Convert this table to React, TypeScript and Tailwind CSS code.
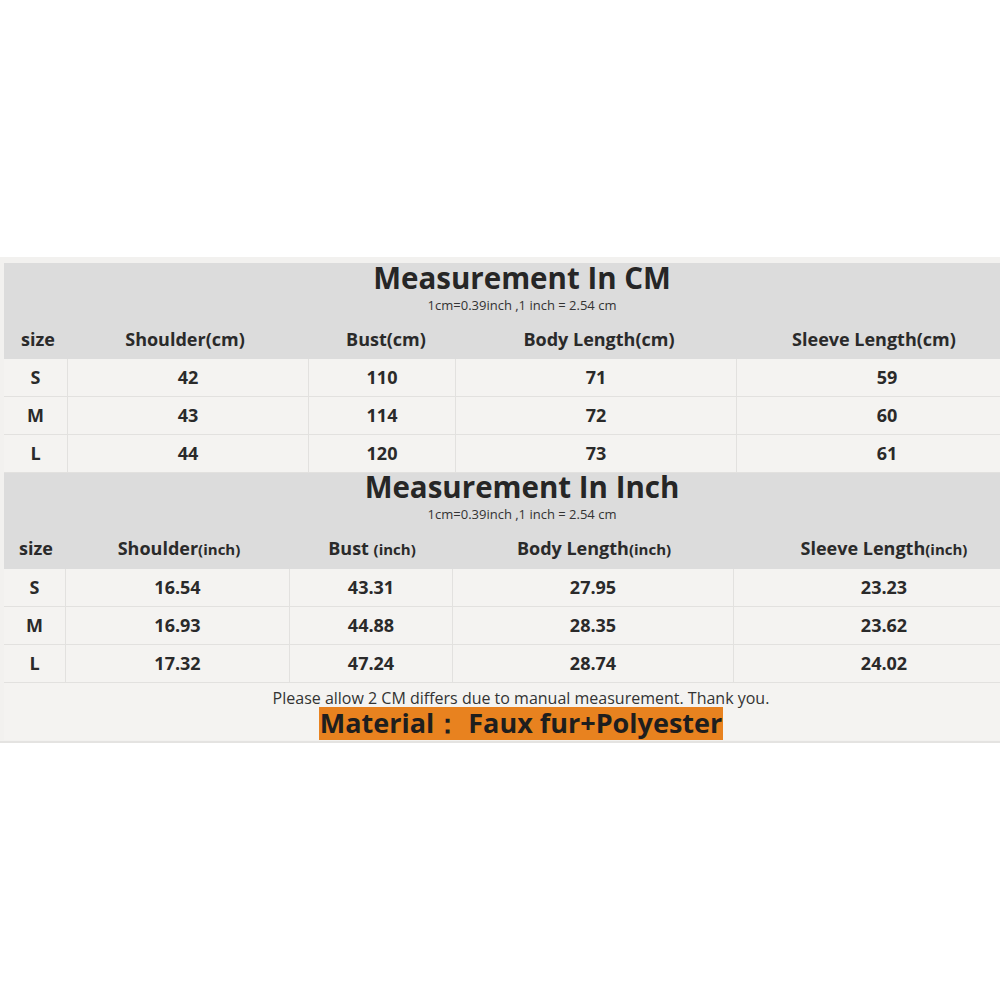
import React from 'react'

const cmCols = ['w-[64px]', 'w-[241px]', 'w-[147px]', 'w-[281px]', 'w-[300px]']
const inCols = ['w-[62px]', 'w-[224px]', 'w-[163px]', 'w-[281px]', 'w-[300px]']

const cmRows = [
  ['S', '42', '110', '71', '59'],
  ['M', '43', '114', '72', '60'],
  ['L', '44', '120', '73', '61'],
]

const inRows = [
  ['S', '16.54', '43.31', '27.95', '23.23'],
  ['M', '16.93', '44.88', '28.35', '23.62'],
  ['L', '17.32', '47.24', '28.74', '24.02'],
]

function Title({ text, mt }: { text: string; mt: string }) {
  return (
    <div className={`flex flex-col items-center ${mt}`}>
      <div className="text-[29.5px] font-bold leading-[30px] text-[#262626] pl-[40px]">{text}</div>
      <div className="text-[13px] leading-[15px] text-[#333] pl-[40px] mt-[5px]">1cm=0.39inch ,1 inch = 2.54 cm</div>
    </div>
  )
}

function DataRows({ rows, cols }: { rows: string[][]; cols: string[] }) {
  return (
    <div>
      {rows.map((r, i) => (
        <div key={i} className="flex h-[38px] border-b border-[#e2e1df] bg-[#f4f3f1]">
          {r.map((c, j) => (
            <div
              key={j}
              className={`${cols[j]} shrink-0 flex items-center justify-center text-[18px] font-bold text-[#2a2a2a] ${j < r.length - 1 ? 'border-r border-[#e2e1df]' : ''}`}
            >
              {c}
            </div>
          ))}
        </div>
      ))}
    </div>
  )
}

export default function App() {
  return (
    <div
      className="w-[1000px] h-[1000px] bg-white pt-[257px] overflow-hidden"
      style={{ fontFamily: '"Open Sans", "Noto Sans", sans-serif' }}
    >
      <div className="bg-[#f2f1ef] pl-[4px] pt-[6px] pb-[1px] border-b-2 border-[#e4e3e1] overflow-hidden">
        {/* CM section */}
        <div className="bg-[#dcdcdc] h-[96px] flex flex-col">
          <Title text="Measurement In CM" mt="mt-0" />
          <div className="flex flex-1 items-center text-[18px] font-bold text-[#2a2a2a] pt-[6px] whitespace-nowrap">
            <div className="w-[68px] shrink-0 text-center">size</div>
            <div className="w-[226px] shrink-0 text-center">Shoulder(cm)</div>
            <div className="w-[176px] shrink-0 text-center">Bust(cm)</div>
            <div className="w-[250px] shrink-0 text-center">Body Length(cm)</div>
            <div className="w-[300px] shrink-0 text-center">Sleeve Length(cm)</div>
          </div>
        </div>
        <DataRows rows={cmRows} cols={cmCols} />

        {/* Inch section */}
        <div className="bg-[#dcdcdc] h-[96px] flex flex-col">
          <Title text="Measurement In Inch" mt="-mt-[1px]" />
          <div className="flex flex-1 items-center text-[18px] font-bold text-[#2a2a2a] pt-[6px] whitespace-nowrap">
            <div className="w-[64px] shrink-0 text-center">size</div>
            <div className="w-[222px] shrink-0 text-center">
              Shoulder<span className="text-[15px]">(inch)</span>
            </div>
            <div className="w-[164px] shrink-0 text-center">
              Bust <span className="text-[15px]">(inch)</span>
            </div>
            <div className="w-[280px] shrink-0 text-center">
              Body Length<span className="text-[15px]">(inch)</span>
            </div>
            <div className="w-[300px] shrink-0 text-center">
              Sleeve Length<span className="text-[15px]">(inch)</span>
            </div>
          </div>
        </div>
        <DataRows rows={inRows} cols={inCols} />

        {/* Footer */}
        <div className="h-[57px] bg-[#f4f3f1] flex flex-col items-center">
          <div className="text-[16px] leading-[20px] text-[#333] mt-[5px] pl-[38px] whitespace-nowrap">
            Please allow 2 CM differs due to manual measurement. Thank you.
          </div>
          <div className="bg-[#e8821f] h-[35px] w-[404px] ml-[38px] -mt-[1px] flex items-center justify-center text-[27px] font-bold text-[#1e1e1e] leading-none pb-[2px] whitespace-nowrap">
            Material：&nbsp;Faux fur+Polyester
          </div>
        </div>
      </div>
    </div>
  )
}
